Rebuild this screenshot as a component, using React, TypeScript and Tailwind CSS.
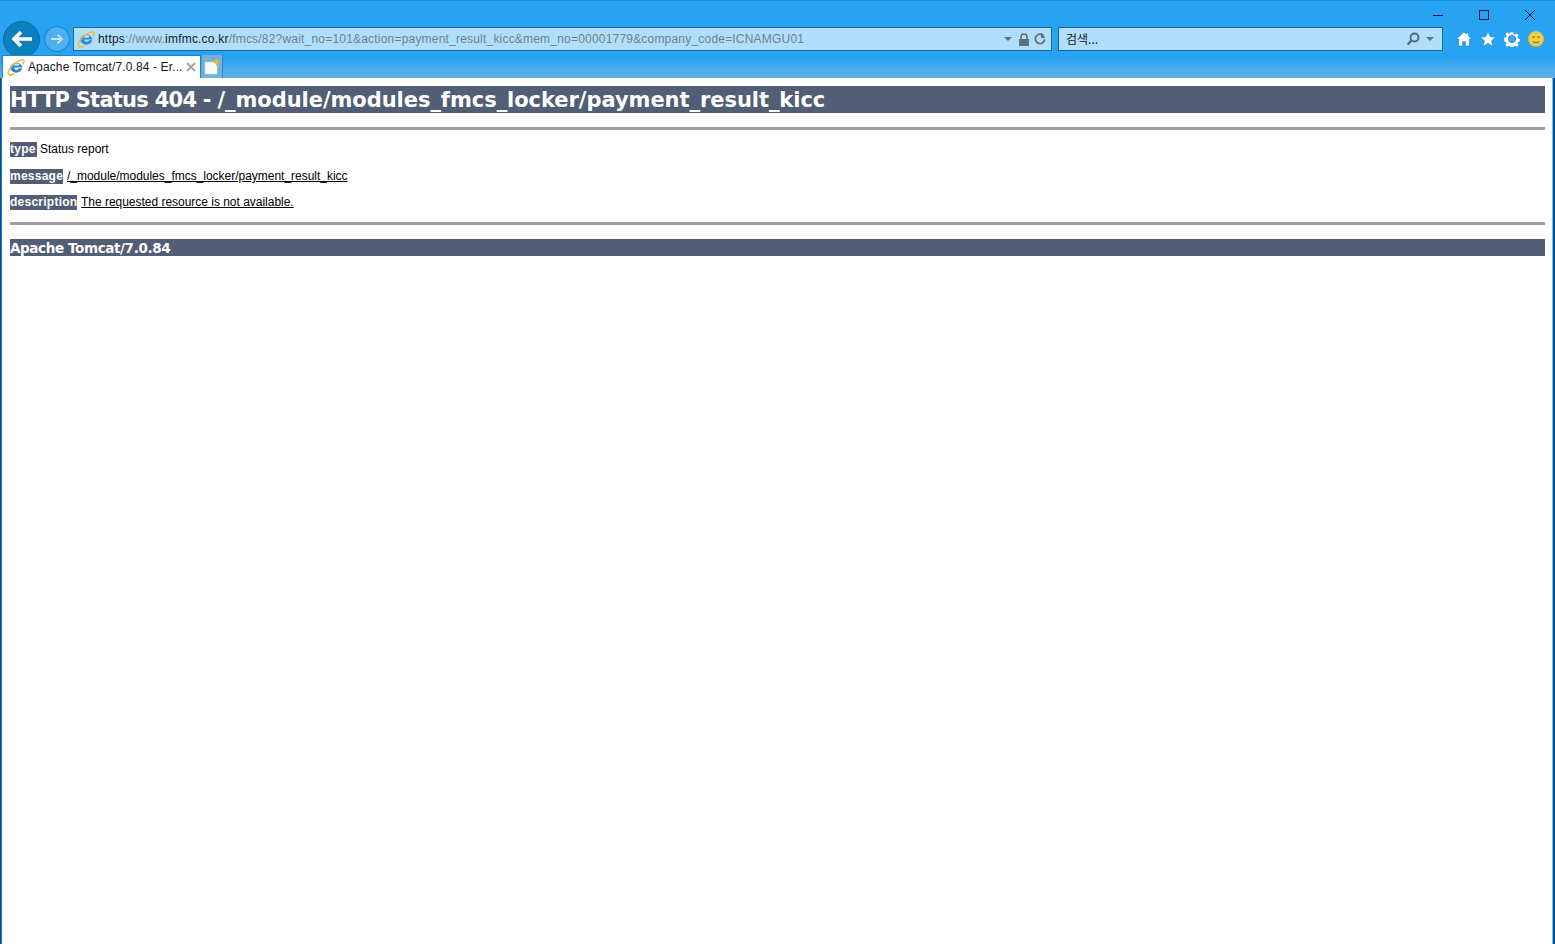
function IeIcon({ className }: { className: string }) {
  return (
    <svg viewBox="0 0 20 20" className={className}>
      <path d="M3 12.500A7.300 7.300 0 0 1 17.300 10.500H8c.2 3 4.300 3.400 5.500 1h3.600c-1.500 5.800-10.500 6.500-13.100 1z" fill="#2f8ad6" />
      <path d="M8.100 8.200h5.600c-.4-2.800-5-2.800-5.600 0z" fill="#e4f3fd" />
      <path d="M1.800 18.300C-.4 15.800 6 6.500 11 4.300c3.600-1.800 6.900-2.900 7.800-1.600.6 1-.4 2.800-1.600 4.300" fill="none" stroke="#e9bb3f" strokeWidth="1.700" />
      <path d="M1.800 18.300c1.500 1.300 4.200.5 6.400-.8" fill="none" stroke="#e9bb3f" strokeWidth="1.700" />
    </svg>
  )
}

function NewTabIcon() {
  return (
    <svg viewBox="0 0 18 18" className="w-[18px] h-[18px]">
      <path d="M2 4h10l2 2v10H2z" fill="#fbfbf6" stroke="#c9d3da" strokeWidth="0.600" />
      <path d="M13.500 0l1.200 2.800 2.800 1.200-2.800 1.200-1.200 2.800-1.200-2.800-2.800-1.200 2.800-1.200z" fill="#f5b52a" />
    </svg>
  )
}

function HomeIcon() {
  return (
    <svg viewBox="0 0 16 16" className="w-[16px] h-[16px]">
      <path
        d="M8 1L0.500 8h2.200v7h3.800v-4.500h3V15h3.800V8h2.200L12.500 4.800V2h-2v1L8 1z"
        fill="#fff"
        stroke="#1677b8"
        strokeWidth="0.500"
      />
    </svg>
  )
}

function StarIcon() {
  return (
    <svg viewBox="0 0 16 16" className="w-[16px] h-[16px]">
      <path
        d="M8 0.500l2.200 5.200 5.500.4-4.200 3.600 1.300 5.500L8 12.300l-4.800 2.900 1.300-5.500L.3 6.100l5.500-.4z"
        fill="#fff"
        stroke="#1677b8"
        strokeWidth="0.500"
      />
    </svg>
  )
}

function GearIcon() {
  return (
    <svg viewBox="0 0 16 16" className="w-[16px] h-[16px]">
      <path
        d="M6.600.8h2.800l.4 2 1.300.6 1.800-1.100 2 2-1.100 1.800.6 1.300 2 .4v2.800l-2 .4-.6 1.300 1.100 1.800-2 2-1.800-1.100-1.300.6-.4 2H6.600l-.4-2-1.300-.6-1.800 1.100-2-2 1.100-1.800-.6-1.300-2-.4V6.600l2-.4.6-1.300-1.100-1.800 2-2 1.800 1.100 1.300-.6z"
        fill="#fff"
        stroke="#1677b8"
        strokeWidth="0.400"
      />
      <circle cx="8" cy="8" r="3.600" fill="#3fa9ee" stroke="#1677b8" strokeWidth="0.800" />
    </svg>
  )
}

function Smiley() {
  return (
    <svg viewBox="0 0 16 16" className="w-[16px] h-[16px]">
      <circle cx="8" cy="8" r="7.700" fill="#ecd04a" stroke="#d8b23a" strokeWidth="0.500" />
      <circle cx="5.500" cy="6" r="1" fill="#8b6b1c" />
      <circle cx="10.500" cy="6" r="1" fill="#8b6b1c" />
      <path d="M4.500 10c1.500 2.200 5.500 2.200 7 0" fill="none" stroke="#8b6b1c" strokeWidth="1" />
    </svg>
  )
}

function Caret() {
  return <span className="w-0 h-0 border-x-[4px] border-x-transparent border-t-[4px] border-t-[#5b7183]" />
}

function WindowButtons() {
  return (
    <div className="flex h-[26px] justify-end items-start pt-[8px] pr-[19px]">
      <svg width="12" height="12" viewBox="0 0 12 12" className="mr-[34px]">
        <path d="M1 6.500h10" stroke="#001a33" strokeWidth="1" />
      </svg>
      <svg width="12" height="12" viewBox="0 0 12 12" className="mr-[34px]">
        <rect x="1.500" y="1.500" width="9" height="9" fill="none" stroke="#001a33" strokeWidth="1" />
      </svg>
      <svg width="12" height="12" viewBox="0 0 12 12">
        <path d="M1 1l10 10M11 1L1 11" stroke="#001a33" strokeWidth="1" />
      </svg>
    </div>
  )
}

function NavButtons() {
  return (
    <div className="flex items-center -my-[7px]">
      <div className="w-[37px] h-[37px] rounded-full bg-[#0c7fbf] border border-[#0a6aa3] flex items-center justify-center">
        <svg width="24" height="20" viewBox="0 0 24 20">
          <path d="M22 10H5M11 3l-7 7 7 7" fill="none" stroke="#fff" strokeWidth="3.600" />
        </svg>
      </div>
      <div className="ml-[4px] w-[26px] h-[26px] rounded-full bg-[#4cb0f0] border border-[#1a7fc0] flex items-center justify-center">
        <svg width="16" height="14" viewBox="0 0 16 14">
          <path d="M2 7h11M8.500 2.500L13 7l-4.500 4.500" fill="none" stroke="#bfe3fb" strokeWidth="1.800" />
        </svg>
      </div>
    </div>
  )
}

function AddressBar() {
  return (
    <div className="ml-[3px] w-[979px] h-[24px] bg-[#b1dffb] border border-[#16699f] flex items-center pl-[3px] pr-[5px]">
      <IeIcon className="w-[18px] h-[18px] shrink-0" />
      <div className="ml-[3px] text-[12px] tracking-[0.2px] text-[#6d7f8c] whitespace-nowrap flex-1 font-['Liberation_Sans',sans-serif]">
        <span className="text-[#10202c]">https</span>
        ://www.
        <span className="text-[#10202c]">imfmc.co.kr</span>
        /fmcs/82?wait_no=101&amp;action=payment_result_kicc&amp;mem_no=00001779&amp;company_code=ICNAMGU01
      </div>
      <Caret />
      <svg width="12" height="13" viewBox="0 0 12 13" className="ml-[6px]">
        <path d="M3 6V4a3 3 0 0 1 6 0v2" fill="none" stroke="#5d717f" strokeWidth="1.600" />
        <rect x="1" y="6" width="10" height="7" fill="#5d717f" />
      </svg>
      <svg width="12" height="12" viewBox="0 0 12 12" className="ml-[4px]">
        <path d="M9.800 3A4.700 4.700 0 1 0 10.700 6.500" fill="none" stroke="#5d717f" strokeWidth="1.800" />
        <path d="M7 0v5h4.500z" fill="#5d717f" />
      </svg>
    </div>
  )
}

function SearchBar() {
  return (
    <div className="ml-[6px] w-[385px] h-[24px] bg-[#b1dffb] border border-[#16699f] flex items-center pl-[7px] pr-[8px]">
      <span className="flex-1 text-[12px] text-[#10202c] font-['Noto_Sans_CJK_KR','Liberation_Sans',sans-serif]">검색...</span>
      <svg width="14" height="14" viewBox="0 0 14 14" className="mr-[6px]">
        <circle cx="8.500" cy="5.500" r="4" fill="none" stroke="#4f6473" strokeWidth="1.800" />
        <path d="M5.500 8.500L1.500 12.500" stroke="#4f6473" strokeWidth="2.200" />
      </svg>
      <Caret />
    </div>
  )
}

function ToolIcons() {
  return (
    <div className="ml-[13px] flex items-center gap-[8px]">
      <HomeIcon />
      <StarIcon />
      <GearIcon />
      <Smiley />
    </div>
  )
}

function TabRow() {
  return (
    <div className="flex mt-[4px] h-[23px] pl-[2px]">
      <div className="w-[199px] h-[23px] bg-white border border-[#1f85c9] border-b-0 flex items-center pl-[4px] pr-[4px]">
        <IeIcon className="w-[18px] h-[18px] shrink-0" />
        <span className="ml-[3px] flex-1 text-[12px] tracking-[0.12px] text-[#1a1a1a] whitespace-nowrap font-['Liberation_Sans',sans-serif]">
          Apache Tomcat/7.0.84 - Er...
        </span>
        <svg width="10" height="10" viewBox="0 0 10 10">
          <path d="M1 1l8 8M9 1L1 9" stroke="#9aa3aa" strokeWidth="1.800" />
        </svg>
      </div>
      <div className="ml-[1px] w-[21px] h-[23px] bg-[#74b1da] border-r border-[#2c86c4] flex items-center justify-center">
        <NewTabIcon />
      </div>
    </div>
  )
}

function InfoRow({
  label,
  value,
  underline,
  className,
  labelWidth,
}: {
  label: string
  value: string
  underline?: boolean
  className: string
  labelWidth: string
}) {
  return (
    <p className={`flex items-center h-[15px] text-[12px] leading-[15px] ${className}`}>
      <b className={`bg-[#525d76] text-white h-[15px] font-['Liberation_Sans',sans-serif] whitespace-nowrap tracking-[0.25px] ${labelWidth}`}>
        {label}
      </b>
      <span className={`text-black font-['Liberation_Sans',sans-serif] ${underline ? 'ml-[4px] underline tracking-[-0.02px]' : 'ml-[3px]'}`}>
        {value}
      </span>
    </p>
  )
}

export default function App() {
  return (
    <div className="w-[1555px] h-[944px] overflow-hidden flex flex-col bg-[#0d4a8f] pl-[1px] pr-[2px]">
      <header className="-ml-[1px] -mr-[2px] h-[78px] shrink-0 bg-gradient-to-b from-[#27a3f2] from-[75%] to-[#5fb2e8] border-t border-[#1b92e6]">
        <WindowButtons />
        <div className="flex items-center pl-[3px]">
          <NavButtons />
          <AddressBar />
          <SearchBar />
          <ToolIcons />
        </div>
        <TabRow />
      </header>

      <main className="flex-1 bg-white pl-[8px] pr-[7px] pt-[8px] border-l border-l-[#1a78c8] border-r border-r-[#5cc8f5] font-['DejaVu_Sans',sans-serif]">
        <h1 className="h-[27px] bg-[#525d76] text-white font-bold text-[21px] leading-[29px] whitespace-pre tracking-[-0.05px]">
          <span className="tracking-[-0.74px]">HTTP Status 404 - </span>/_module/modules_fmcs_locker/payment_result_kicc
        </h1>
        <div className="mt-[14px] h-[3px] bg-[#a0a0a0]" />
        <InfoRow className="mt-[12px]" labelWidth="w-[27px]" label="type" value="Status report" />
        <InfoRow
          className="mt-[12px]"
          labelWidth="w-[53px]"
          label="message"
          value="/_module/modules_fmcs_locker/payment_result_kicc"
          underline
        />
        <InfoRow
          className="mt-[11px]"
          labelWidth="w-[67px]"
          label="description"
          value="The requested resource is not available."
          underline
        />
        <div className="mt-[12px] h-[3px] bg-[#a0a0a0]" />
        <h3 className="mt-[14px] h-[17px] bg-[#525d76] text-white font-bold text-[13.5px] leading-[18px] whitespace-nowrap tracking-[-0.38px]">
          Apache Tomcat/7.0.84
        </h3>
      </main>
    </div>
  )
}
